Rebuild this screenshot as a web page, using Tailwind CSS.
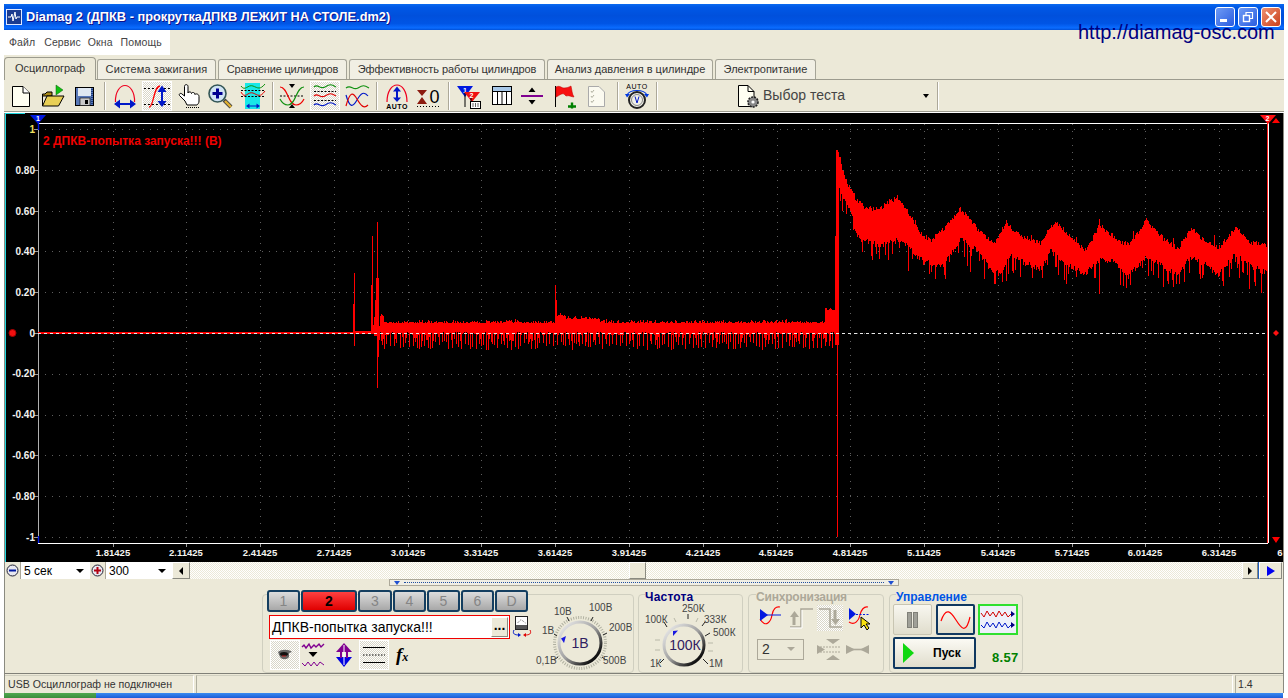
<!DOCTYPE html>
<html lang="ru">
<head>
<meta charset="UTF-8">
<title>Diamag 2</title>
<script src="https://cdn.jsdelivr.net/npm/@tailwindcss/browser@4"></script>
</head>
<body class="w-[1288px] h-[698px] overflow-hidden bg-white font-['Liberation_Sans',Arial,sans-serif] text-[11px] text-[#333]">
<div class="relative ml-[4px] mt-[4px] w-[1280px] h-[689px] flex flex-col bg-[#ece9d8]">

  <!-- title bar -->
  <div class="h-[26px] shrink-0 flex items-center bg-[linear-gradient(#0a6af0,#0058e6_12%,#0050dc_45%,#0055e5_75%,#0a6cff_92%,#0050d8)]">
    <svg class="ml-[2px] w-[16px] h-[16px]" viewBox="0 0 16 16"><rect x="0.5" y="0.5" width="15" height="15" fill="#1c3c90" stroke="#e0e8ff"/><path d="M2 8H5L6 5L7 12L9 3L10 10L11 8H14" fill="none" stroke="#fff"/></svg>
    <span class="ml-[4px] text-[12.8px] font-bold text-white [text-shadow:1px_1px_#0f1089]">Diamag 2 (ДПКВ - прокруткаДПКВ ЛЕЖИТ НА СТОЛЕ.dm2)</span>
    <div class="ml-auto mr-[3px] flex gap-[3px]">
      <div class="w-[20px] h-[20px] rounded-[3px] border border-white bg-[linear-gradient(135deg,#6f9bf5,#2a5ce0)] flex items-end pl-[4px] pb-[4px]"><div class="w-[7px] h-[3px] bg-white"></div></div>
      <div class="w-[20px] h-[20px] rounded-[3px] border border-white bg-[linear-gradient(135deg,#6f9bf5,#2a5ce0)] flex items-center justify-center">
        <svg class="w-[12px] h-[12px]" viewBox="0 0 12 12" fill="none" stroke="#fff"><rect x="1.5" y="4.5" width="6" height="6" stroke-width="1.4"/><path d="M4 4V1.5H10.5V7.5H8" stroke-width="1.2"/></svg>
      </div>
      <div class="w-[20px] h-[20px] rounded-[3px] border border-white bg-[linear-gradient(135deg,#f09070,#c8401c)] flex items-center justify-center">
        <svg class="w-[12px] h-[12px]" viewBox="0 0 12 12"><path d="M1 1L11 11M11 1L1 11" stroke="#fff" stroke-width="2"/></svg>
      </div>
    </div>
  </div>

  <!-- url over the window -->
  <span class="absolute left-[1074px] top-[16px] text-[20px] leading-[24px] text-[#000080]">http://diamag-osc.com</span>

  <!-- menu -->
  <div class="h-[25px] w-[166px] shrink-0 bg-white flex items-center text-[10.5px] tracking-[0.1px] text-[#444]">
    <span class="ml-[5px]">Файл</span><span class="ml-[9px]">Сервис</span><span class="ml-[7px]">Окна</span><span class="ml-[8px]">Помощь</span>
  </div>

  <!-- tabs -->
  <div class="mt-[2px] h-[23px] shrink-0 flex items-end border-b border-[#9c9b8e]">
    <div class="w-[92px] h-[23px] -mb-px z-10 bg-[#ece9d8] border border-b-0 border-[#9c9b8e] rounded-t-[4px] flex items-center justify-center pb-[2px] tracking-[-0.1px]">Осциллограф</div>
    <div class="ml-[1px] w-[119px] h-[20px] bg-[#f1efe4] border border-b-0 border-[#a5a497] rounded-t-[3px] flex items-center justify-center tracking-[0.1px]">Система зажигания</div>
    <div class="ml-[2px] w-[129px] h-[20px] bg-[#f1efe4] border border-b-0 border-[#a5a497] rounded-t-[3px] flex items-center justify-center tracking-[-0.2px]">Сравнение цилиндров</div>
    <div class="ml-[2px] w-[196px] h-[20px] bg-[#f1efe4] border border-b-0 border-[#a5a497] rounded-t-[3px] flex items-center justify-center tracking-[-0.1px]">Эффективность работы цилиндров</div>
    <div class="ml-[2px] w-[166px] h-[20px] bg-[#f1efe4] border border-b-0 border-[#a5a497] rounded-t-[3px] flex items-center justify-center">Анализ давления в цилиндре</div>
    <div class="ml-[2px] w-[101px] h-[20px] bg-[#f1efe4] border border-b-0 border-[#a5a497] rounded-t-[3px] flex items-center justify-center">Электропитание</div>
  </div>

  <!-- toolbar -->
  <div class="h-[31px] shrink-0 flex items-center">
    <svg class="ml-[4px] w-[26px] h-[26px]" viewBox="0 0 26 26"><path d="M4.5 3.5H15L21.5 10V23.5H4.5Z" fill="#fffff2" stroke="#000"/><path d="M15 3.5V10H21.5" fill="#fff" stroke="#000"/></svg>
    <svg class="ml-[5px] w-[26px] h-[26px]" viewBox="0 0 26 26"><path d="M17 2L24 7L17 12Z" fill="#10c010" stroke="#086008" stroke-width=".5"/><path d="M3.5 23V11H6L8 9H13V13H3.5" fill="#a88a18" stroke="#000"/><path d="M3.5 23L8 13H25L19.5 23Z" fill="#e8cf55" stroke="#000"/></svg>
    <svg class="ml-[6px] w-[26px] h-[26px]" viewBox="0 0 26 26"><rect x="4.5" y="4.5" width="18" height="18" fill="#5878b8" stroke="#000"/><rect x="7" y="5" width="13" height="8" fill="#dfe8f2"/><rect x="9" y="15" width="10" height="7.5" fill="#c8c8c8" stroke="#000" stroke-width=".6"/><rect x="14" y="17" width="3" height="4" fill="#000"/><path d="M21 6V21" stroke="#1c3c80" stroke-dasharray="1 1" stroke-width="2"/></svg>
    <div class="ml-[7px] w-[2px] h-[28px] border-l border-l-[#aca899] border-r border-r-white"></div>

    <svg class="ml-[6px] w-[26px] h-[26px]" viewBox="0 0 26 26" fill="none"><path d="M3.5 19C3 9 8 2.5 13 2.5S23 9 22.5 19" stroke="#f00020" stroke-width="1.2"/><path d="M5 21H21" stroke="#0018c8" stroke-width="2"/><path d="M8 16.5L2 21L8 25.5ZM18 16.5L24 21L18 25.5Z" fill="#0018c8"/></svg>
    <div class="ml-[4px] w-[30px] h-[30px] flex items-center justify-center border border-white bg-[repeating-conic-gradient(#fff_0_25%,#d9d6c8_0_50%)] bg-[length:2px_2px]">
      <svg class="w-[28px] h-[28px]" viewBox="0 0 28 28" fill="none"><path d="M1 6.5H27M1 22.5H27" stroke="#000" stroke-dasharray="2 2"/><path d="M6 25C11 25 10 5 17 4" stroke="#f00" stroke-width="1.3"/><path d="M19 8V20" stroke="#0018c8" stroke-width="2"/><path d="M14.5 10L19 3.5L23.5 10ZM14.5 19L19 25L23.5 19Z" fill="#0018c8"/></svg>
    </div>
    <svg class="ml-[5px] w-[26px] h-[26px]" viewBox="0 0 26 26"><path d="M8 18L2.5 12.5C1.5 11 3.5 9.5 5 11L7.5 13V3.5C7.5 1 11 1 11 3.5V10C11 8.5 14.5 8.5 14.5 10.5C14.5 9 18 9 18 11.5C18 10.5 22 10.5 22 13.5V18C22 20 21 21 20 22H10Z" fill="#fff" stroke="#000"/><path d="M9 24.5H22" stroke="#000" stroke-dasharray="1 1"/></svg>
    <svg class="ml-[4px] w-[26px] h-[26px]" viewBox="0 0 26 26" fill="none"><path d="M17 17L24 24" stroke="#444" stroke-width="4"/><path d="M18 18L24 24" stroke="#e0b030" stroke-width="2.4"/><circle cx="10.5" cy="10.5" r="8.5" fill="#d0e4f4" stroke="#355" stroke-width="1.6"/><path d="M10.5 5.5V15.5M5.5 10.5H15.5" stroke="#000090" stroke-width="3"/></svg>
    <svg class="ml-[7px] w-[26px] h-[26px]" viewBox="0 0 26 26" fill="none"><rect x="5" y="0" width="15" height="26" fill="#18e8e8"/><path d="M1 3C5 9 8 1 13 3S20 7 25 1" stroke="#109010"/><path d="M1 7.5H25M1 13.5H25" stroke="#000" stroke-dasharray="2 1.5"/><path d="M1 9C5 17 8 8 13 10S20 15 25 8" stroke="#e00000"/><path d="M8 23H18" stroke="#0018c8"/><path d="M9.5 20.5L6 23L9.5 25.5ZM16.5 20.5L20 23L16.5 25.5Z" fill="#0018c8"/></svg>
    <div class="ml-[6px] w-[2px] h-[28px] border-l border-l-[#aca899] border-r border-r-white"></div>

    <svg class="ml-[5px] w-[26px] h-[26px]" viewBox="0 0 26 26" fill="none"><path d="M1 13H25" stroke="#000" stroke-dasharray="2 1.5"/><path d="M1 4C9 4 9 22 17 22C21 22 23 20 25 16" stroke="#f00000" stroke-width="1.2"/><path d="M25 4C17 4 17 22 9 22C5 22 3 20 1 16" stroke="#109010" stroke-width="1.2"/><path d="M10 1H16L13 5ZM10 25H16L13 21Z" fill="#000"/></svg>
    <div class="ml-[5px] w-[30px] h-[30px] flex items-center justify-center border border-white bg-[repeating-conic-gradient(#fff_0_25%,#d9d6c8_0_50%)] bg-[length:2px_2px]">
      <svg class="w-[28px] h-[28px]" viewBox="0 0 28 28" fill="none"><path d="M3 5C7 1 9 8 14 5S20 2 25 5" stroke="#109010" stroke-width="1.2"/><path d="M3 9.5H25M3 18.5H25" stroke="#000" stroke-dasharray="2 1.5"/><path d="M3 14C7 10 9 17 14 14S20 11 25 14" stroke="#e00000" stroke-width="1.2"/><path d="M3 23C7 19 9 26 14 23S20 20 25 23" stroke="#0018c8" stroke-width="1.2"/></svg>
    </div>
    <svg class="ml-[4px] w-[26px] h-[26px]" viewBox="0 0 26 26" fill="none"><path d="M2 5C7 1 9 8 14 5S20 2 25 5" stroke="#109010" stroke-width="1.2"/><path d="M2 12C6 26 9 24 13 17S20 8 24 13" stroke="#0018c8" stroke-width="1.2"/><path d="M2 23C6 8 9 9 13 16S20 26 24 22" stroke="#e00000" stroke-width="1.2"/></svg>
    <div class="ml-[6px] w-[2px] h-[28px] border-l border-l-[#aca899] border-r border-r-white"></div>

    <svg class="ml-[6px] w-[26px] h-[26px]" viewBox="0 0 26 26" fill="none"><path d="M3 19C3 8 8 2 13 2S23 8 23 19" stroke="#f00020" stroke-width="1.2"/><path d="M13 7V16" stroke="#0018c8" stroke-width="2"/><path d="M9 8.5L13 3.5L17 8.5ZM9 14.5L13 19L17 14.5Z" fill="#0018c8"/><text x="13" y="26" text-anchor="middle" font-size="7" font-weight="700" fill="#000" letter-spacing=".5">AUTO</text></svg>
    <svg class="ml-[5px] w-[26px] h-[26px]" viewBox="0 0 26 26"><path d="M2 7H12L7 13ZM2 21H12L7 14Z" fill="#8c1c10"/><path d="M2 23.5H25" stroke="#000" stroke-dasharray="1 2"/><text x="19.5" y="20" text-anchor="middle" font-size="18" fill="#000">0</text></svg>
    <div class="ml-[7px] w-[2px] h-[28px] border-l border-l-[#aca899] border-r border-r-white"></div>

    <svg class="ml-[5px] w-[26px] h-[26px]" viewBox="0 0 26 26"><path d="M2 3H18L10 14Z" fill="#0018e0"/><path d="M10 10V24" stroke="#000"/><text x="10" y="9.5" text-anchor="middle" font-size="7" font-weight="700" fill="#fff">1</text><path d="M9 9H25L17 19Z" fill="#f01010"/><path d="M16 14V24" stroke="#000"/><text x="16.5" y="15" text-anchor="middle" font-size="7" font-weight="700" fill="#fff">2</text><rect x="15.5" y="18.5" width="10" height="7" fill="#fff" stroke="#000"/><path d="M18 20V24M20.5 20V24M23 20V24" stroke="#000" stroke-width=".6"/></svg>
    <svg class="ml-[8px] w-[26px] h-[26px]" viewBox="0 0 26 26"><rect x="3.5" y="3.5" width="19" height="18" fill="#fff" stroke="#000"/><rect x="4" y="4" width="18" height="4" fill="#a8c8e8"/><path d="M3.5 8.5H22.5M8.5 8.5V21M13 8.5V21M17.5 8.5V21" stroke="#000"/></svg>
    <svg class="ml-[4px] w-[26px] h-[26px]" viewBox="0 0 26 26"><path d="M2 13H24" stroke="#800090" stroke-width="2"/><path d="M9.5 9L13 4.5L16.5 9ZM9.5 17L13 21.5L16.5 17Z" fill="#000"/></svg>
    <svg class="ml-[6px] w-[26px] h-[26px]" viewBox="0 0 26 26"><path d="M4.5 3V24" stroke="#000"/><path d="M5 4C9 2 10 5 13 5S18 4 20 3C21 7 21 11 23 14C20 14 19 12 15 13L13 11C10 10 8 13 5 14Z" fill="#f81010" stroke="#b00" stroke-width=".5"/><path d="M17 23.5H25M21 19.5V25.5" stroke="#008000" stroke-width="2.4"/></svg>
    <svg class="ml-[6px] w-[26px] h-[26px]" viewBox="0 0 26 26"><path d="M5.5 3.5H16L21.5 9V23.5H5.5Z" fill="#fbfaf0" stroke="#aaa"/><path d="M8 8L9 9.5L11 7M8 13L9 14.5L11 12M8 18L9 19.5L11 17" stroke="#b0b0a0" fill="none"/></svg>
    <div class="ml-[8px] w-[2px] h-[28px] border-l border-l-[#aca899] border-r border-r-white"></div>

    <svg class="ml-[5px] w-[26px] h-[28px]" viewBox="0 0 26 28" fill="none"><text x="13" y="6.5" text-anchor="middle" font-size="7" fill="#000" letter-spacing=".6">AUTO</text><path d="M3 13C6 7 20 7 23 13" stroke="#0038e0" stroke-width="1.2"/><path d="M1 12H6L3 15.5ZM20 12H25L23 15.5Z" fill="#0038e0"/><circle cx="13" cy="18" r="8" fill="#f0f0e8" stroke="#222" stroke-width="2"/><circle cx="13" cy="18" r="5.5" stroke="#888"/><path d="M11 14.5L13 21L15 14.5" stroke="#0018c8"/></svg>
    <div class="ml-[6px] w-[2px] h-[28px] border-l border-l-[#aca899] border-r border-r-white"></div>

    <svg class="ml-[78px] w-[26px] h-[26px]" viewBox="0 0 26 26"><path d="M2.5 2.5H12L18 8.5V23.5H2.5Z" fill="#fffff2" stroke="#000"/><path d="M12 2.5V8.5H18" fill="none" stroke="#000"/><circle cx="17" cy="19" r="5" fill="#888" stroke="#222" stroke-width="1.6" stroke-dasharray="2 1"/><circle cx="17" cy="19" r="1.6" fill="#fff"/></svg>
    <span class="ml-[1px] w-[160px] text-[14px] text-[#444]">Выбор теста</span>
    <div class="w-0 h-0 border-x-[3px] border-x-transparent border-t-[4px] border-t-black"></div>
    <div class="ml-[8px] w-[2px] h-[28px] border-l border-l-[#aca899] border-r border-r-white"></div>
  </div>
  <div class="h-[1px] shrink-0 bg-[#9c9b8e]"></div>
  <div class="h-[1px] shrink-0 bg-white"></div>

  <!-- oscillogram -->
  <div class="h-[449px] shrink-0 flex border-x border-x-[#8a8a80]">
    <svg class="w-[1278px] h-[449px] bg-black font-bold" viewBox="5 113 1278 449">
      <path d="M5.5 113V562M5 113.5H25" stroke="#20d8e0" fill="none"/>
      <path id="grid" fill="none" stroke="#5e5e5e" stroke-dasharray="1 6"/>
      <path id="ticks" fill="none" stroke="#9a9a9a"/>
      <path d="M38 123.5H1268M38 543.5H1268" stroke="#fff"/>
      <path d="M38.5 123V543" stroke="#b0b0b0"/>
      <path d="M38.5 123V130M38.5 536V543" stroke="#0018e0" stroke-width="1.4"/>
      <path d="M1268.5 123V543" stroke="#fff"/>
      <path d="M1267.5 123V543" stroke="#ff2020"/>
      <path id="wave" fill="none" stroke="#ff0000" shape-rendering="crispEdges"/>
      <path d="M38 333.5H1267" stroke="#e8e8e8" stroke-dasharray="3 3"/>
      <path d="M30 115H46L38 124Z" fill="#0018e0"/>
      <text x="38" y="121" text-anchor="middle" font-size="7" fill="#fff">1</text>
      <path d="M1260 115H1276L1268 124Z" fill="#ff1010"/>
      <text x="1267.5" y="121" text-anchor="middle" font-size="7" fill="#fff">2</text>
      <path d="M1272 123L1276 118L1280 123ZM1272 537H1280L1276 543Z" fill="#ff0000"/>
      <path d="M1276 330L1279 333L1276 336L1273 333Z" fill="#ff1010"/>
      <circle cx="12.5" cy="333" r="3.5" fill="#f01010" stroke="#a00"/>
      <text x="43" y="145" font-size="12" fill="#f00000" font-weight="700">2 ДПКВ-попытка запуска!!! (В)</text>
      <g font-size="10" fill="#f4f4f0" text-anchor="end">
        <text x="35" y="133" fill="#f0e060">1</text><text x="35" y="174">0.80</text><text x="35" y="215">0.60</text><text x="35" y="255">0.40</text><text x="35" y="296">0.20</text><text x="35" y="337">0</text><text x="35" y="377">-0.20</text><text x="35" y="418">-0.40</text><text x="35" y="459">-0.60</text><text x="35" y="500">-0.80</text><text x="35" y="541">-1</text>
      </g>
      <g font-size="9.5" fill="#f4f4f0" text-anchor="middle">
        <text x="113" y="556">1.81425</text><text x="186" y="556">2.11425</text><text x="260" y="556">2.41425</text><text x="334" y="556">2.71425</text><text x="408" y="556">3.01425</text><text x="481" y="556">3.31425</text><text x="555" y="556">3.61425</text><text x="629" y="556">3.91425</text><text x="703" y="556">4.21425</text><text x="776" y="556">4.51425</text><text x="850" y="556">4.81425</text><text x="924" y="556">5.11425</text><text x="998" y="556">5.41425</text><text x="1072" y="556">5.71425</text><text x="1145" y="556">6.01425</text><text x="1219" y="556">6.31425</text><text x="1280" y="556">6</text>
      </g>
    </svg>
  </div>

  <!-- zoom row and scrollbar -->
  <div class="h-[17px] shrink-0 flex border-x border-x-[#8a8a80] text-[12px] text-black">
    <div class="w-[16px] bg-[#ece9d8] flex items-center justify-center border-r border-r-[#aca899]">
      <svg class="w-[13px] h-[13px]" viewBox="0 0 13 13"><circle cx="6.5" cy="6.5" r="5.5" fill="#e8e8f0" stroke="#223"/><path d="M3 6.5H10" stroke="#0018a0" stroke-width="2"/></svg>
    </div>
    <div class="w-[69px] bg-white flex items-center pl-[3px]"><span class="w-[52px]">5 сек</span><div class="w-0 h-0 border-x-[4px] border-x-transparent border-t-[4px] border-t-black"></div></div>
    <div class="w-[16px] bg-[#ece9d8] flex items-center justify-center border-r border-r-[#aca899]">
      <svg class="w-[13px] h-[13px]" viewBox="0 0 13 13"><circle cx="6.5" cy="6.5" r="5.5" fill="#e8e8f0" stroke="#223"/><path d="M3 6.5H10M6.5 3V10" stroke="#b00010" stroke-width="2"/></svg>
    </div>
    <div class="w-[66px] bg-white flex items-center pl-[3px]"><span class="w-[49px]">300</span><div class="w-0 h-0 border-x-[4px] border-x-transparent border-t-[4px] border-t-black"></div></div>
    <div class="w-[18px] flex items-center justify-center border border-t-white border-l-white border-r-[#8a8a80] border-b-[#8a8a80]"><div class="w-0 h-0 border-y-[4px] border-y-transparent border-r-[4px] border-r-black"></div></div>
    <div class="w-[1052px] bg-[repeating-conic-gradient(#fff_0_25%,#ece9d8_0_50%)] bg-[length:2px_2px] pl-[439px]">
      <div class="w-[17px] h-[17px] bg-[#ece9d8] border border-t-white border-l-white border-r-[#8a8a80] border-b-[#8a8a80]"></div>
    </div>
    <div class="w-[16px] flex items-center justify-center border border-t-white border-l-white border-r-[#8a8a80] border-b-[#8a8a80]"><div class="w-0 h-0 border-y-[4px] border-y-transparent border-l-[4px] border-l-black"></div></div>
    <div class="w-[1px] bg-[#2060c0]"></div>
    <div class="w-[23px] flex items-center justify-center border border-t-white border-l-white border-r-[#8a8a80] border-b-[#8a8a80]"><div class="w-0 h-0 border-y-[5px] border-y-transparent border-l-[8px] border-l-[#0000f0]"></div></div>
  </div>

  <!-- control area -->
  <div class="h-[95px] shrink-0 flex flex-col border-x border-x-[#8a8a80] border-b border-b-[#808078]">
    <div class="ml-[384px] w-[510px] h-[7px] shrink-0 flex items-center justify-between px-[4px] border border-[#aca899] bg-[#f0eee4]">
      <div class="w-0 h-0 border-x-[3px] border-x-transparent border-t-[4px] border-t-[#2050d0]"></div>
      <div class="flex-1 mx-[4px] border-t border-dotted border-t-[#2050a0]"></div>
      <div class="w-0 h-0 border-x-[3px] border-x-transparent border-t-[4px] border-t-[#2050d0]"></div>
    </div>

    <div class="mt-[8px] ml-[257px] flex items-start">
      <!-- channel -->
      <div class="w-[372px] h-[79px] flex border border-[#d0cfc0] rounded-[4px]">
        <div class="w-[270px] h-[82px] -mt-[5px] shrink-0">
          <div class="ml-[4px] flex gap-[1px] text-[14px] text-[#858585]">
            <div class="w-[33px] h-[22px] flex items-center justify-center rounded-[3px] border-2 border-[#143e60] bg-[linear-gradient(#dcdcdc,#a8a8a8)]">1</div>
            <div class="w-[56px] h-[22px] flex items-center justify-center rounded-[3px] border-2 border-[#143e60] bg-[linear-gradient(#ff4040,#e00000)] font-bold text-black">2</div>
            <div class="w-[34px] h-[22px] flex items-center justify-center rounded-[3px] border-2 border-[#143e60] bg-[linear-gradient(#dcdcdc,#a8a8a8)]">3</div>
            <div class="w-[33px] h-[22px] flex items-center justify-center rounded-[3px] border-2 border-[#143e60] bg-[linear-gradient(#dcdcdc,#a8a8a8)]">4</div>
            <div class="w-[33px] h-[22px] flex items-center justify-center rounded-[3px] border-2 border-[#143e60] bg-[linear-gradient(#dcdcdc,#a8a8a8)]">5</div>
            <div class="w-[33px] h-[22px] flex items-center justify-center rounded-[3px] border-2 border-[#143e60] bg-[linear-gradient(#dcdcdc,#a8a8a8)]">6</div>
            <div class="w-[33px] h-[22px] flex items-center justify-center rounded-[3px] border-2 border-[#143e60] bg-[linear-gradient(#dcdcdc,#a8a8a8)]">D</div>
          </div>
          <div class="mt-[3px] ml-[6px] flex items-center">
            <div class="w-[241px] h-[24px] flex items-center justify-between bg-white border border-[#f00000] pl-[2px] pr-[1px] text-[14px] text-black">
              <span>ДПКВ-попытка запуска!!!</span>
              <div class="w-[17px] h-[20px] flex items-center justify-center bg-[#ece9d8] border border-t-white border-l-white border-r-[#8a8a80] border-b-[#8a8a80] font-bold leading-[8px] pb-[4px]">...</div>
            </div>
            <svg class="ml-[2px] w-[20px] h-[24px]" viewBox="0 0 20 24" fill="none"><rect x="3.5" y="1.5" width="12" height="13" fill="#fff" stroke="#222"/><rect x="4" y="10" width="11" height="4" fill="#555"/><path d="M5.5 8L9 4.5L13.5 8" stroke="#666" stroke-dasharray="1 1"/><path d="M2 15C0 19 3 20 7 20" stroke="#0018c8"/><path d="M6 18L9 20L6 22Z" fill="#0018c8"/><path d="M18 15C20 19 17 20 13 20" stroke="#e00000"/><path d="M14 18L11 20L14 22Z" fill="#e00000"/></svg>
          </div>
          <div class="mt-[1px] ml-[7px] flex items-center h-[30px]">
            <div class="w-[30px] h-[30px] flex items-center justify-center border border-white bg-[repeating-conic-gradient(#fff_0_25%,#d9d6c8_0_50%)] bg-[length:2px_2px]">
              <svg class="w-[16px] h-[12px]" viewBox="0 0 16 12"><path d="M1 3C4 0 12 0 15 3L12 4V8C10 11 5 11 3 8Z" fill="#666"/><ellipse cx="7" cy="5" rx="4" ry="2" fill="#111"/><path d="M5 7H9" stroke="#c02020"/></svg>
            </div>
            <svg class="ml-[1px] w-[24px] h-[26px]" viewBox="0 0 24 26" fill="none"><path d="M1 5L3 3L5 6L8 2L10 6L13 3L15 5L18 2L20 5L23 2" stroke="#800090" stroke-width="1.4"/><path d="M7.5 10H16.5L12 15Z" fill="#000"/><path d="M1 21L4 24L7 20L10 24L13 20L16 24L19 20L23 23" stroke="#800090"/></svg>
            <svg class="ml-[8px] w-[22px] h-[26px]" viewBox="0 0 22 26"><path d="M11 1L19 10H3Z" fill="#800090"/><path d="M11 25L19 15H3Z" fill="#0000e0"/><path d="M8 10V16M14 10V16" stroke="#800090" stroke-width="2"/><path d="M11 3V23" stroke="#fff"/></svg>
            <div class="ml-[4px] w-[30px] h-[30px] flex items-center justify-center border border-white bg-[repeating-conic-gradient(#fff_0_25%,#d9d6c8_0_50%)] bg-[length:2px_2px]">
              <svg class="w-[26px] h-[22px]" viewBox="0 0 26 22"><path d="M2 3.5H24M2 18.5H24" stroke="#000"/><path d="M2 11H24" stroke="#000" stroke-dasharray="1.5 1.5"/></svg>
            </div>
            <span class="ml-[7px] text-[19px] italic font-bold font-['Liberation_Serif',serif] text-black">f<span class="text-[12px]">x</span></span>
          </div>
        </div>
        <svg class="w-[100px] h-[77px] -ml-[1px]" viewBox="533 595 100 77" fill="none">
          <defs><linearGradient id="ring" x1="0" y1="0" x2="1" y2="1"><stop offset="0" stop-color="#f4f4f4"/><stop offset=".5" stop-color="#a0a0a0"/><stop offset=".85" stop-color="#111"/></linearGradient></defs>
          <circle cx="581" cy="643" r="25.5" stroke="#b0b0a0" stroke-width="3" stroke-dasharray="1 1.5"/>
          <circle cx="581" cy="643" r="21" stroke="url(#ring)" stroke-width="3"/>
          <path d="M558 636L555 634M570 621L568 617M592 621L594 617M604 635L608 633M603 657L607 660M559 657L555 660" stroke="#222"/>
          <path d="M567 636L562 638.5L565 643Z" fill="#1818e0"/>
          <text x="581" y="648" text-anchor="middle" font-size="14" fill="#302060" stroke="none">1В</text>
          <g font-size="10" fill="#444" stroke="none">
            <text x="537" y="664">0,1В</text><text x="543" y="634">1В</text><text x="555" y="615">10В</text><text x="590" y="611">100В</text><text x="610" y="631">200В</text><text x="604" y="664">500В</text>
          </g>
        </svg>
      </div>

      <!-- frequency -->
      <div class="ml-[4px] w-[105px] h-[79px] border border-[#d0cfc0] rounded-[4px]">
        <div class="-mt-[7px] ml-[6px] w-fit h-[14px] bg-[#ece9d8] text-[12px] font-bold text-[#000080] tracking-[0.2px]">Частота</div>
        <svg class="w-[103px] h-[69px]" viewBox="639 602 103 69" fill="none">
          <circle cx="684" cy="645" r="20" stroke="url(#ring)" stroke-width="3"/>
          <path d="M667 627L664 622M688 619V614M702 626L705 622M705 636L710 633M703 659L708 664M664 659L660 663" stroke="#222"/>
          <path d="M660 640H655M660 650H655M708 643H713M708 651H713M676 622L674 618M696 622L698 618" stroke="#b8b8a8"/>
          <path d="M673 631L678 630.5L673 636Z" fill="#1818e0"/>
          <text x="685" y="650" text-anchor="middle" font-size="14" fill="#302060" stroke="none">100К</text>
          <g font-size="10" fill="#444" stroke="none">
            <text x="645" y="623">100К</text><text x="682" y="612">250К</text><text x="704" y="623">333К</text><text x="713" y="636">500К</text><text x="650" y="667">1К</text><text x="709" y="667">1М</text>
          </g>
        </svg>
      </div>

      <!-- sync -->
      <div class="ml-[5px] w-[136px] h-[79px] border border-[#d0cfc0] rounded-[4px]">
        <div class="-mt-[7px] ml-[7px] w-fit h-[14px] bg-[#ece9d8] text-[12px] font-bold text-[#aca899] tracking-[-0.2px]">Синхронизация</div>
        <div class="mt-[2px] ml-[10px] h-[27px] flex items-center">
          <svg class="w-[24px] h-[26px]" viewBox="0 0 24 26" fill="none"><path d="M1 14C7 24 12 16 13 10S17 1 21 2" stroke="#f00" stroke-width="1.2"/><path d="M1 10H22" stroke="#0018e0"/><path d="M1 4L9 10L1 16Z" fill="#0018e0"/></svg>
          <svg class="ml-[6px] w-[24px] h-[24px]" viewBox="0 0 24 24" fill="none"><path d="M1 21H12V3H24" stroke="#aca899" stroke-width="1.6"/><path d="M1 22H13V4" stroke="#fff"/><path d="M5 10V19" stroke="#aca899" stroke-width="3"/><path d="M1 11L5.5 5L10 11Z" fill="#aca899"/></svg>
          <div class="ml-[4px] w-[26px] h-[26px] flex items-center justify-center bg-[repeating-conic-gradient(#fff_0_25%,#d9d6c8_0_50%)] bg-[length:2px_2px]">
            <svg class="w-[24px] h-[24px]" viewBox="0 0 24 24" fill="none"><path d="M1 3H12V21H24" stroke="#aca899" stroke-width="1.6"/><path d="M17 4V13" stroke="#aca899" stroke-width="3"/><path d="M13 13L17.5 19L22 13Z" fill="#aca899"/></svg>
          </div>
          <svg class="ml-[5px] w-[24px] h-[26px]" viewBox="0 0 24 26" fill="none"><path d="M1 17C7 21 11 15 12 10S16 1 20 2" stroke="#f00" stroke-width="1.2"/><path d="M8 9.5H22" stroke="#0018e0" stroke-dasharray="2 1.5"/><path d="M1 3L8 9L1 15Z" fill="#0018e0"/><path d="M13 12L13 23L16 20L19 25L21 23L18 19H22Z" fill="#f8e010" stroke="#000"/></svg>
        </div>
        <div class="mt-[7px] ml-[8px] h-[22px] flex items-center">
          <div class="w-[47px] h-[21px] flex items-center justify-between pl-[4px] pr-[8px] border border-[#aca899] text-[14px] text-[#333]"><span>2</span><div class="w-0 h-0 border-x-[4px] border-x-transparent border-t-[4px] border-t-[#aca899]"></div></div>
          <svg class="ml-[12px] w-[25px] h-[22px]" viewBox="0 0 25 22" fill="none"><path d="M1 7V16L9 11.5Z" fill="#aca899"/><path d="M10 1H24L17 6ZM10 22H24L17 17Z" fill="#aca899"/><path d="M1 9H25M1 14H25" stroke="#aca899" stroke-dasharray="2 1"/></svg>
          <svg class="ml-[4px] w-[25px] h-[22px]" viewBox="0 0 25 22"><path d="M1 7V16L10 11.5ZM24 7V16L15 11.5Z" fill="#aca899"/><path d="M1 11.5H24" stroke="#aca899" stroke-width="1.6"/></svg>
        </div>
      </div>

      <!-- control -->
      <div class="ml-[5px] w-[134px] h-[79px] border border-[#d0cfc0] rounded-[4px]">
        <div class="-mt-[7px] ml-[6px] w-fit h-[14px] bg-[#ece9d8] text-[12px] font-bold text-[#0055e5]">Управление</div>
        <div class="mt-[2px] ml-[3px] flex">
          <div class="w-[39px] h-[31px] flex items-center justify-center gap-[1px] border border-[#c8c5b2] rounded-[2px] bg-[linear-gradient(#f8f7f0,#e0ddcc)]">
            <div class="w-[5px] h-[16px] bg-[#a0a098] border border-[#808078]"></div><div class="w-[5px] h-[16px] bg-[#a0a098] border border-[#808078]"></div>
          </div>
          <div class="ml-[4px] w-[39px] h-[31px] flex items-center justify-center border-2 border-[#103860] rounded-[2px] bg-[linear-gradient(#fbfaf4,#e0ddcc)]">
            <svg class="w-[31px] h-[20px]" viewBox="0 0 31 20" fill="none"><path d="M1 11C6 -4 11 2 16 10S26 25 30 7" stroke="#f00" stroke-width="1.2"/></svg>
          </div>
          <div class="ml-[3px] w-[40px] h-[31px] flex items-center justify-center border-2 border-[#30e030] bg-[#eef0fa]">
            <svg class="w-[36px] h-[24px]" viewBox="0 0 36 24" fill="none"><path d="M1 5L4 9L7 3L10 8L13 4L16 9L19 3L22 8L25 4L28 9L31 6" stroke="#d00000"/><path d="M1 17L4 20L7 14L10 19L13 15L16 20L19 14L22 19L25 15L28 20L31 17" stroke="#0018c8"/><path d="M31 3V9L35 6ZM31 14V20L35 17Z" fill="#000080"/></svg>
          </div>
        </div>
        <div class="mt-[2px] ml-[3px] flex items-end">
          <div class="w-[83px] h-[32px] flex items-center border-2 border-[#103860] rounded-[2px] bg-[linear-gradient(#fbfaf4,#e0ddcc)] text-[12px] font-bold text-black">
            <div class="ml-[8px] w-0 h-0 border-y-[10px] border-y-transparent border-l-[11px] border-l-[#10d810]"></div>
            <span class="ml-[19px]">Пуск</span>
          </div>
          <span class="ml-[16px] mb-[2px] text-[13px] font-bold text-[#008000] tracking-[0.3px]">8.57</span>
        </div>
      </div>
    </div>
  </div>

  <!-- status bar -->
  <div class="flex-1 flex items-stretch gap-[2px] pt-[1px] border-x border-x-[#8a8a80] text-[10.6px]">
    <div class="w-[189px] flex items-center pl-[3px] border-r border-r-white border-t border-t-[#d0cfc0]">USB Осциллограф не подключен</div>
    <div class="w-[1037px] border-l border-l-[#b0af9f] border-r border-r-white border-t border-t-[#d0cfc0]"></div>
    <div class="flex-1 flex items-center pl-[2px] border-l border-l-[#b0af9f] border-t border-t-[#d0cfc0]">1.4</div>
  </div>
</div>

<!-- taskbar -->
<div class="ml-[4px] w-[1279px] h-[5px] flex bg-[linear-gradient(#3a8cf0,#1c5cd8)]">
  <div class="w-[92px] bg-[linear-gradient(#50a850,#3c8c3c)]"></div>
</div>

<script>
  // grid and ticks
  let grid = '', ticks = '';
  for (let i = 0; i <= 10; i++) {
    let y = Math.round(129 + i * 40.8) + 0.5;
    grid += 'M38 ' + y + 'H1267';
    ticks += 'M34 ' + y + 'H38';
  }
  for (let i = 0; i < 16; i++) {
    let x = Math.round(112.6 + i * 73.77) + 0.5;
    grid += 'M' + x + ' 124V543';
    ticks += 'M' + x + ' 543V547';
  }
  document.getElementById('grid').setAttribute('d', grid);
  document.getElementById('ticks').setAttribute('d', ticks);

  // fixed seed, so every run draws the same trace
  let seed = 12345;
  function rnd() {
    seed = (seed * 16807) % 2147483647;
    return seed / 2147483647;
  }

  // envelope of the trace after the jump: [x, y]
  const topEnv = [[838,152],[845,178],[855,197],[865,208],[880,208],[890,200],[897,197],[905,207],[920,233],[930,240],[945,227],[960,208],[970,220],[985,237],[995,243],[1005,222],[1020,235],[1040,243],[1055,220],[1070,237],[1085,250],[1100,225],[1120,242],[1130,243],[1146,220],[1165,240],[1178,248],[1190,228],[1205,240],[1218,248],[1235,227],[1250,242],[1266,245]];
  const botEnv = [[838,190],[845,205],[852,222],[855,237],[860,243],[880,250],[897,242],[910,253],[920,263],[935,270],[945,267],[960,243],[975,253],[990,273],[1000,277],[1010,260],[1025,267],[1040,273],[1050,255],[1065,268],[1085,278],[1100,262],[1115,267],[1128,280],[1146,260],[1165,272],[1178,278],[1190,262],[1205,268],[1218,280],[1235,258],[1250,270],[1266,277]];
  function env(table, x) {
    for (let i = 1; i < table.length; i++) {
      if (x <= table[i][0]) {
        let a = table[i - 1], b = table[i];
        return a[1] + (b[1] - a[1]) * (x - a[0]) / (b[0] - a[0]);
      }
    }
    return table[table.length - 1][1];
  }

  let d = 'M38 332.5H354M38 333.5H354';
  function bar(x, y1, y2) {
    d += 'M' + x + '.5 ' + Math.round(y1) + 'V' + Math.round(y2);
  }
  // flat line up to the first spikes
  bar(354, 273, 346); bar(353, 304, 334);
  for (let x = 355; x < 372; x++) bar(x, 331, 334);
  bar(372, 236, 334); bar(371, 285, 334); bar(375, 300, 336); bar(376, 278, 336);
  bar(377, 222, 388); bar(378, 278, 357); bar(373, 325, 334); bar(374, 317, 336); bar(379, 326, 340);
  // low band: solid core with a comb of spikes under it
  let nextSpike = 382;
  for (let x = 380; x < 836; x++) {
    let top = 323;
    if (x < 384) top = 316;
    else if (x >= 555 && x < 566) top = 316;
    else if (x >= 566 && x < 600) top = 319;
    else if (x >= 825) top = 310;
    let low = 332 + rnd() * 3;
    if (x == nextSpike) {
      low = 342 + rnd() * 8;
      nextSpike = x + 2 + Math.floor(rnd() * 3);
    } else if (rnd() < 0.2) {
      low = 337 + rnd() * 5;
    }
    bar(x, top - rnd() * rnd() * 4, low);
  }
  bar(555, 285, 330); bar(556, 300, 330);
  // jump
  bar(835, 236, 345); bar(836, 150, 345); bar(837, 150, 345); bar(838, 152, 345);
  bar(837, 345, 537);
  // high band
  for (let x = 839; x < 1267; x++) {
    let top = env(topEnv, x) + 3 - rnd() * 5;
    let bot = env(botEnv, x) - 7 + rnd() * 6;
    if (rnd() < 0.18) bot += 5 + rnd() * 12;
    if (rnd() < 0.03) bot += 12 + rnd() * 12;
    if (rnd() < 0.03) top -= 4 + rnd() * 7;
    bar(x, top, bot);
  }
  document.getElementById('wave').setAttribute('d', d);
</script>
</body>
</html>
